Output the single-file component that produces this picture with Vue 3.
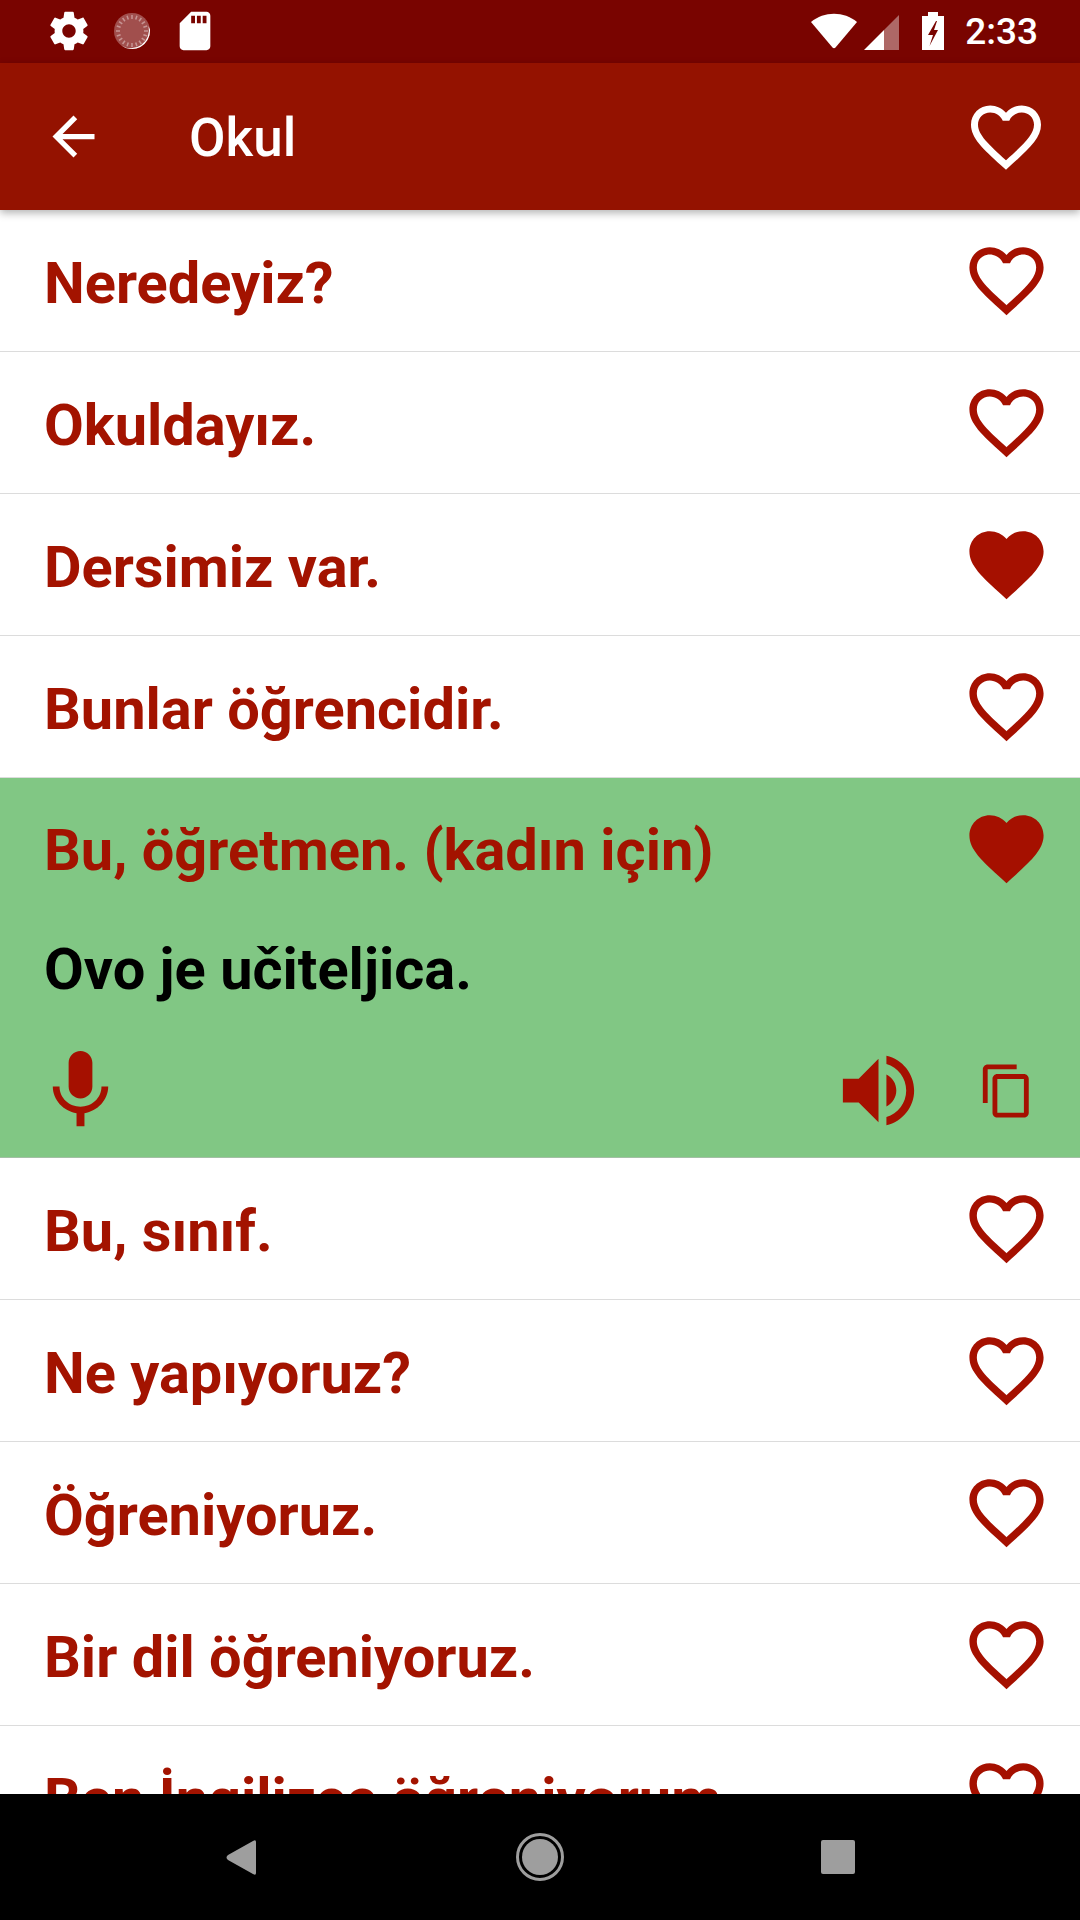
<template>
  <div class="screen">
    <div class="status-bar">
      <svg class="status-icon" viewBox="0 0 24 24"><path :d="icons.settings" /></svg>
      <svg class="status-icon" viewBox="0 0 46 46">
        <circle cx="23" cy="23" r="18" class="loader-disc" />
        <path d="M41 22A18 18 0 0 1 12 37.200A18 18 0 0 0 39.500 18A18 18 0 0 1 41 22Z" />
        <line v-for="a in ticks" :key="a" x1="23" y1="7" x2="23" y2="11" class="loader-tick" :transform="`rotate(${a} 23 23)`" />
      </svg>
      <svg class="status-icon" viewBox="0 0 24 24"><path :d="icons.sdCard" /></svg>
      <div class="status-right">
        <svg class="wifi" viewBox="0 0 46 38"><path d="M0 10C13-1 33-1 46 10L24.500 35.500Q23 37 21.500 35.500Z" /></svg>
        <svg class="signal" viewBox="0 0 35 35">
          <path d="M0 35L20 15V35Z" />
          <path d="M20 15L35 0V35H20Z" opacity="0.4" />
        </svg>
        <svg class="battery" viewBox="0 0 22 38">
          <path d="M6 0H16V4H22V38H0V4H6ZM14 9L6 23H11L7.500 34L16 18H12L15 9Z" fill-rule="evenodd" />
        </svg>
        <span class="clock">2:33</span>
      </div>
    </div>

    <header class="toolbar">
      <svg class="back" viewBox="0 0 24 24"><path :d="icons.back" /></svg>
      <h1 class="title">Okul</h1>
      <svg class="toolbar-heart" viewBox="0 0 24 24"><path :d="icons.heartOutline" /></svg>
    </header>

    <main class="list">
      <div v-for="item in phrases" :key="item.text" class="row" :class="{ open: item.translation }">
        <div class="row-head">
          <span class="phrase">{{ item.text }}</span>
          <svg class="heart" viewBox="0 0 24 24"><path :d="item.fav ? icons.heart : icons.heartOutline" /></svg>
        </div>
        <template v-if="item.translation">
          <div class="translation">{{ item.translation }}</div>
          <div class="actions">
            <svg class="action-icon" viewBox="0 0 24 24"><path :d="icons.mic" /></svg>
            <svg class="action-icon speaker" viewBox="0 0 24 24"><path :d="icons.volume" /></svg>
            <svg class="copy" viewBox="0 0 24 24"><path :d="icons.copy" /></svg>
          </div>
        </template>
      </div>
    </main>

    <nav class="nav-bar">
      <div class="nav-cell">
        <svg class="nav-back" viewBox="0 0 30 35"><path d="M27 1Q30-1 30 2V33Q30 36 27 34L2 20Q-1 17.500 2 15Z" /></svg>
      </div>
      <div class="nav-cell">
        <svg class="nav-home" viewBox="0 0 48 48">
          <circle cx="24" cy="24" r="22.500" class="nav-ring" />
          <circle cx="24" cy="24" r="18" />
        </svg>
      </div>
      <div class="nav-cell"><div class="nav-square"></div></div>
    </nav>
  </div>
</template>

<script setup>
const icons = {
  settings: 'M19.43 12.98c.04-.32.07-.64.07-.98s-.03-.66-.07-.98l2.11-1.65c.19-.15.24-.42.12-.64l-2-3.46c-.12-.22-.39-.3-.61-.22l-2.49 1c-.52-.4-1.08-.73-1.69-.98l-.38-2.65C14.46 2.18 14.25 2 14 2h-4c-.25 0-.46.18-.49.42l-.38 2.65c-.61.25-1.17.59-1.69.98l-2.49-1c-.23-.09-.49 0-.61.22l-2 3.46c-.13.22-.07.49.12.64l2.11 1.65c-.04.32-.07.65-.07.98s.03.66.07.98l-2.11 1.65c-.19.15-.24.42-.12.64l2 3.46c.12.22.39.3.61.22l2.49-1c.52.4 1.08.73 1.69.98l.38 2.65c.03.24.24.42.49.42h4c.25 0 .46-.18.49-.42l.38-2.65c.61-.25 1.17-.59 1.69-.98l2.49 1c.23.09.49 0 .61-.22l2-3.46c.12-.22.07-.49-.12-.64l-2.11-1.65zM12 15.5c-1.93 0-3.5-1.57-3.5-3.5s1.57-3.5 3.5-3.5 3.5 1.57 3.5 3.5-1.57 3.5-3.5 3.5z',
  sdCard: 'M18 2h-8L4.02 8 4 20c0 1.1.9 2 2 2h12c1.1 0 2-.9 2-2V4c0-1.1-.9-2-2-2zm-6 6h-2V4h2v4zm3 0h-2V4h2v4zm3 0h-2V4h2v4z',
  back: 'M20 11H7.83l5.59-5.59L12 4l-8 8 8 8 1.41-1.41L7.83 13H20v-2z',
  heart: 'M12 21.35l-1.45-1.32C5.4 15.36 2 12.28 2 8.5 2 5.42 4.42 3 7.5 3c1.74 0 3.41.81 4.5 2.09C13.09 3.81 14.76 3 16.5 3 19.58 3 22 5.42 22 8.5c0 3.78-3.4 6.86-8.55 11.54L12 21.35z',
  heartOutline: 'M16.5 3c-1.74 0-3.41.81-4.5 2.09C10.91 3.81 9.24 3 7.5 3 4.42 3 2 5.42 2 8.5c0 3.78 3.4 6.86 8.55 11.54L12 21.35l1.45-1.32C18.6 15.36 22 12.28 22 8.5 22 5.42 19.58 3 16.5 3zm-4.4 15.55l-.1.1-.1-.1C7.14 14.24 4 11.39 4 8.5 4 6.5 5.5 5 7.5 5c1.54 0 3.04.99 3.57 2.36h1.87C13.46 5.99 14.96 5 16.5 5c2 0 3.5 1.5 3.5 3.5 0 2.89-3.14 5.74-7.900 10.050z',
  mic: 'M12 14c1.66 0 3-1.34 3-3V5c0-1.66-1.34-3-3-3S9 3.34 9 5v6c0 1.66 1.34 3 3 3zm5.3-3c0 3-2.54 5.1-5.3 5.1S6.7 14 6.7 11H5c0 3.41 2.72 6.23 6 6.72V21h2v-3.28c3.28-.48 6-3.3 6-6.72h-1.7z',
  volume: 'M3 9v6h4l5 5V4L7 9H3zm13.5 3c0-1.77-1.02-3.29-2.5-4.03v8.05c1.48-.73 2.5-2.25 2.5-4.02zM14 3.23v2.06c2.89.86 5 3.54 5 6.71s-2.11 5.85-5 6.71v2.06c4.01-.91 7-4.49 7-8.77s-2.99-7.86-7-8.77z',
  copy: 'M16 1H4c-1.1 0-2 .9-2 2v14h2V3h12V1zm3 4H8c-1.1 0-2 .9-2 2v14c0 1.1.9 2 2 2h11c1.1 0 2-.9 2-2V7c0-1.1-.9-2-2-2zm0 16H8V7h11v14z'
};

const ticks = Array.from({ length: 20 }, (_, i) => i * 18);

const phrases = [
  { text: 'Neredeyiz?' },
  { text: 'Okuldayız.' },
  { text: 'Dersimiz var.', fav: true },
  { text: 'Bunlar öğrencidir.' },
  { text: 'Bu, öğretmen. (kadın için)', fav: true, translation: 'Ovo je učiteljica.' },
  { text: 'Bu, sınıf.' },
  { text: 'Ne yapıyoruz?' },
  { text: 'Öğreniyoruz.' },
  { text: 'Bir dil öğreniyoruz.' },
  { text: 'Ben İngilizce öğreniyorum.' }
];
</script>

<style>
html, body {
  margin: 0;
  background: #fff;
}
</style>

<style scoped>
.screen {
  width: 1080px;
  height: 1920px;
  display: flex;
  flex-direction: column;
  overflow: hidden;
  font-family: Roboto, "Liberation Sans", sans-serif;
  background: #fff;
}

.status-bar {
  height: 63px;
  flex: none;
  display: flex;
  align-items: center;
  gap: 17px;
  padding: 0 42px 1px 45.5px;
  background: #790400;
  box-sizing: border-box;
}

.status-bar svg {
  fill: #fff;
  flex: none;
}

.status-icon {
  width: 46px;
  height: 46px;
}

.loader-disc {
  fill: rgba(255, 255, 255, 0.3);
}

.loader-tick {
  stroke: rgba(255, 255, 255, 0.4);
  stroke-width: 1.500;
}

.status-right {
  margin-left: auto;
  display: flex;
  align-items: center;
}

.wifi {
  width: 46px;
  height: 38px;
  margin-right: 7px;
}

.signal {
  width: 35px;
  height: 35px;
  margin-right: 23px;
  margin-top: 2px;
}

.battery {
  width: 22px;
  height: 38px;
  margin-right: 21px;
}

.clock {
  color: #fff;
  font-size: 37px;
  font-weight: 500;
  line-height: 63px;
}

.toolbar {
  height: 147px;
  flex: none;
  display: flex;
  align-items: center;
  padding: 0 32px 0 42px;
  background: #941200;
  box-shadow: 0 3px 8px rgba(0, 0, 0, 0.3);
  position: relative;
  z-index: 1;
  box-sizing: border-box;
}

.back {
  width: 63px;
  height: 63px;
  fill: #fff;
}

.title {
  margin: 2px 0 0 84px;
  color: #fff;
  font-size: 53px;
  font-weight: 500;
}

.toolbar-heart {
  width: 84px;
  height: 84px;
  margin-left: auto;
  fill: #fff;
}

.list {
  flex: 1;
  min-height: 0;
  overflow: hidden;
}

.row {
  border-bottom: 1px solid #dcdcdc;
}

.row.open {
  height: 379px;
  border-bottom-color: #a3bfa5;
  background: #81c784;
}

.row-head {
  height: 141px;
  display: flex;
  align-items: center;
  justify-content: space-between;
  padding: 0 29.5px 0 44px;
}

.row.open .row-head {
  height: 140px;
}

.phrase {
  position: relative;
  top: 2px;
  color: #a31300;
  font-size: 57.750px;
  font-weight: 700;
}

.heart {
  width: 89px;
  height: 89px;
  fill: #a51000;
}

.translation {
  padding-left: 44px;
  margin-top: -2px;
  height: 112px;
  line-height: 106px;
  color: #000;
  font-size: 57.750px;
  font-weight: 700;
}

.actions {
  display: flex;
  align-items: center;
  padding: 15px 44px 0 33px;
}

.action-icon {
  width: 95px;
  height: 95px;
  fill: #a51000;
}

.speaker {
  margin-left: auto;
  margin-right: 52px;
}

.copy {
  width: 58px;
  height: 58px;
  fill: #a51000;
}

.nav-bar {
  height: 126px;
  flex: none;
  display: flex;
  justify-content: center;
  background: #000;
  position: relative;
  z-index: 1;
}

.nav-cell {
  width: 298px;
  display: flex;
  align-items: center;
  justify-content: center;
}

.nav-back {
  width: 30px;
  height: 35px;
  margin-right: 2px;
  fill: #9e9e9e;
}

.nav-home {
  width: 48px;
  height: 48px;
  fill: #9e9e9e;
}

.nav-ring {
  fill: none;
  stroke: #9e9e9e;
  stroke-width: 3;
}

.nav-square {
  width: 34px;
  height: 34px;
  border-radius: 2px;
  background: #9e9e9e;
}
</style>
